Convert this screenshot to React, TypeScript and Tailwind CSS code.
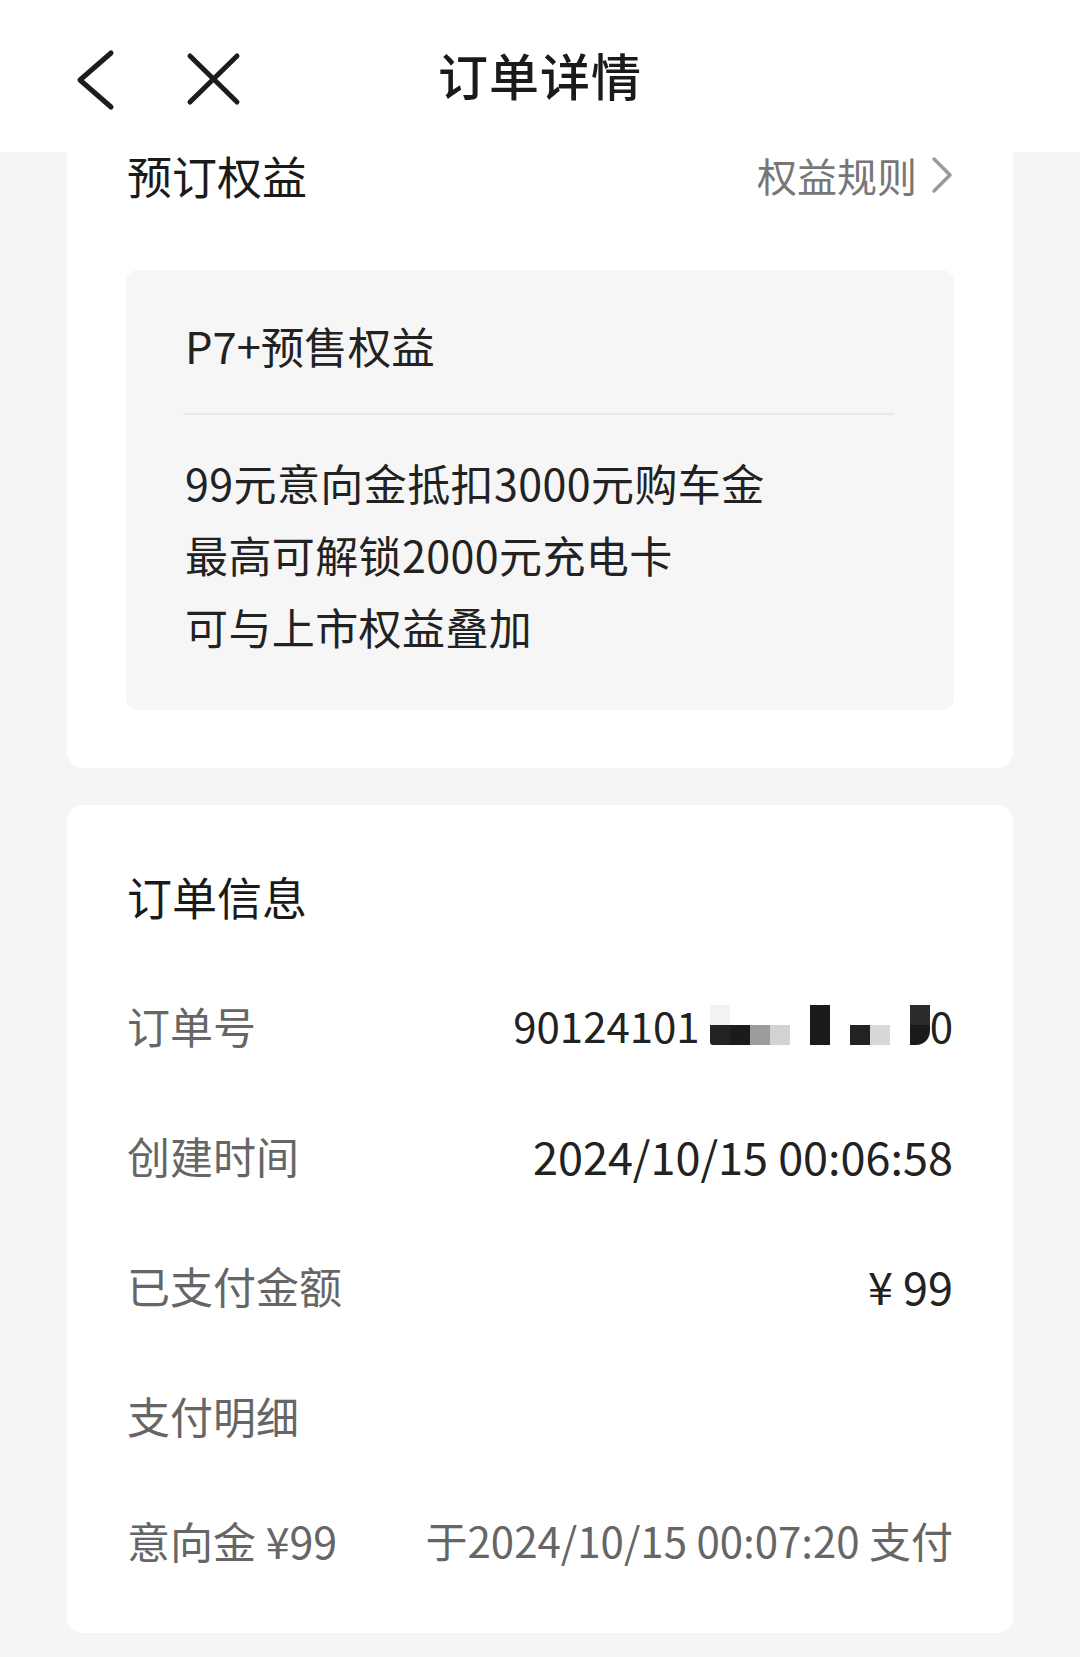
import type { ReactNode } from 'react';

const FONT = '"Noto Sans CJK SC", "Noto Sans", sans-serif';

const perks = ['99元意向金抵扣3000元购车金', '最高可解锁2000元充电卡', '可与上市权益叠加'];

function Header() {
  return (
    <header className="relative flex h-[152px] items-center justify-center bg-white">
      <svg className="absolute left-[74px] top-[48px]" width="44" height="64" viewBox="0 0 44 64">
        <path d="M37 5 L6 32 L37 59" fill="none" stroke="#1c1c1c" strokeWidth="5" strokeLinecap="round" strokeLinejoin="round" />
      </svg>
      <svg className="absolute left-[184px] top-[50px]" width="60" height="58" viewBox="0 0 60 58">
        <path d="M6 6 L53 52 M53 6 L6 52" fill="none" stroke="#1c1c1c" strokeWidth="5" strokeLinecap="round" />
      </svg>
      <h1 className="pb-[4px] text-[50px] font-medium leading-none tracking-[1px] text-[#1a1a1a]">订单详情</h1>
    </header>
  );
}

function Mosaic() {
  return (
    <span className="mx-[10px] mt-[10px] flex h-[40px] items-stretch">
      <span className="flex w-[20px] flex-col">
        <span className="h-1/2 bg-[#f2f2f2]" />
        <span className="h-1/2 rounded-bl-[3px] bg-[#232323]" />
      </span>
      <span className="flex w-[20px] flex-col">
        <span className="h-1/2" />
        <span className="h-1/2 bg-[#1b1b1b]" />
      </span>
      <span className="flex w-[20px] flex-col">
        <span className="h-1/2" />
        <span className="h-1/2 bg-[#9c9c9c]" />
      </span>
      <span className="flex w-[20px] flex-col">
        <span className="h-1/2" />
        <span className="h-1/2 bg-[#d2d2d2]" />
      </span>
      <span className="w-[20px]" />
      <span className="w-[20px] bg-[#1b1b1b]" />
      <span className="w-[20px]" />
      <span className="flex w-[20px] flex-col">
        <span className="h-1/2" />
        <span className="h-1/2 bg-[#222]" />
      </span>
      <span className="flex w-[20px] flex-col">
        <span className="h-1/2" />
        <span className="h-1/2 bg-[#d8d8d8]" />
      </span>
      <span className="w-[20px]" />
      <span className="flex w-[20px] flex-col">
        <span className="h-1/2 bg-[#2b2b2b]" />
        <span className="h-1/2 rounded-br-[14px] bg-[#1b1b1b]" />
      </span>
    </span>
  );
}

function Row({ label, children, h = 'h-[130px]' }: { label: string; children?: ReactNode; h?: string }) {
  return (
    <div className={`flex items-center justify-between ${h}`}>
      <span className="text-[43px] leading-none text-[#666]">{label}</span>
      {children}
    </div>
  );
}

export default function App() {
  return (
    <div className="min-h-[1657px] w-[1080px] bg-[#f5f5f5]" style={{ fontFamily: FONT }}>
      <Header />

      <section className="mx-[67px] rounded-b-[16px] bg-white px-[60px] pb-[58px]">
        <div className="flex h-[46px] items-center justify-between">
          <h2 className="text-[45px] leading-none text-[#1a1a1a]">预订权益</h2>
          <div className="flex items-center gap-[14px] text-[40px] leading-none text-[#777]">
            <span>权益规则</span>
            <svg width="22" height="40" viewBox="0 0 22 40">
              <path d="M3 4 L19 20 L3 36" fill="none" stroke="#9a9a9a" strokeWidth="3.5" strokeLinecap="round" strokeLinejoin="round" />
            </svg>
          </div>
        </div>

        <div className="mx-[-1px] mt-[72px] rounded-[12px] bg-[#f6f6f6] pb-[48px] pl-[59px] pr-[60px] pt-[52px]">
          <p className="text-[43.5px] leading-[48px] text-[#222]">P7+预售权益</p>
          <div className="ml-[-2px] mt-[43px] h-[2px] bg-[#e8e8e8]" />
          <ul className="mt-[31px]">
            {perks.map((p) => (
              <li key={p} className="h-[72px] text-[43px] leading-[72px] tracking-[0.4px] text-[#222]">
                {p}
              </li>
            ))}
          </ul>
        </div>
      </section>

      <section className="mx-[67px] mt-[37px] rounded-[16px] bg-white px-[60px] pb-[33px] pt-[67px]">
        <h2 className="text-[45px] leading-[50px] text-[#1a1a1a]">订单信息</h2>
        <div className="mt-[38px]">
          <Row label="订单号">
            <span className="flex items-start text-[42px] leading-[60px] text-[#222]">
              <span>90124101</span>
              <Mosaic />
              <span className="ml-[-10px]">0</span>
            </span>
          </Row>
          <Row label="创建时间">
            <span className="text-[45px] leading-none text-[#222]">2024/10/15 00:06:58</span>
          </Row>
          <Row label="已支付金额">
            <span className="text-[45px] leading-none text-[#222]">¥ 99</span>
          </Row>
          <Row label="支付明细" />
          <Row label="意向金 ¥99" h="h-[120px]">
            <span className="text-[42px] leading-none text-[#666]">于2024/10/15 00:07:20 支付</span>
          </Row>
        </div>
      </section>
    </div>
  );
}
